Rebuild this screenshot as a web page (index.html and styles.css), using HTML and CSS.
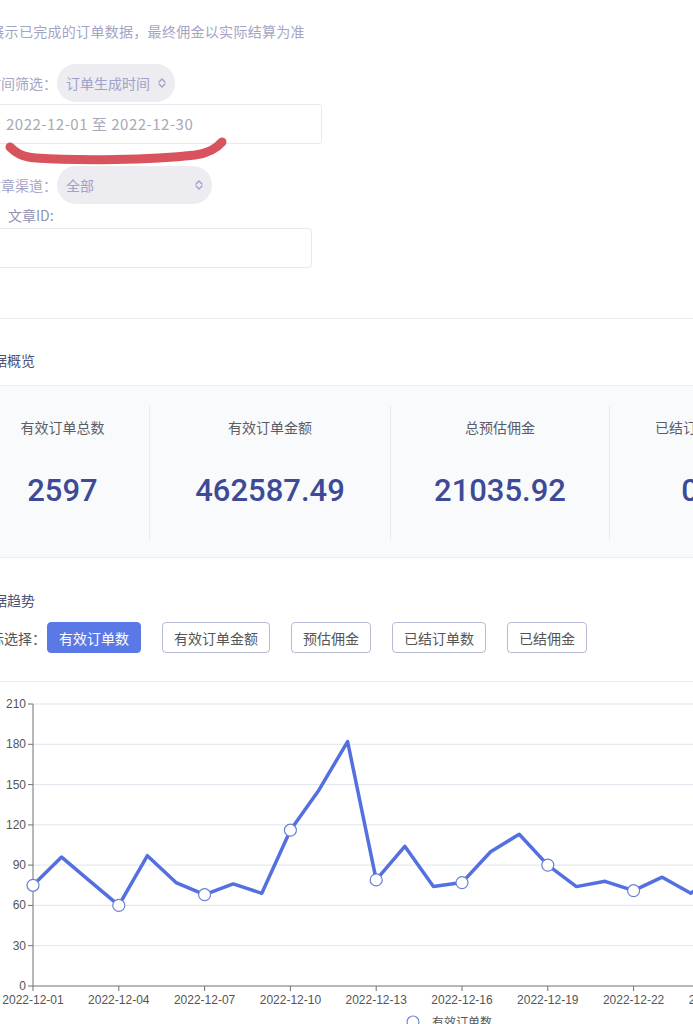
FILE: index.html
```html
<!DOCTYPE html>
<html lang="zh-CN">
<head>
    <meta charset="UTF-8">
    <meta name="viewport" content="width=device-width, initial-scale=1.0">
    <title>订单数据</title>
    <link rel="stylesheet" href="styles.css">
</head>
<body>
    <div class="page">
        <section class="filters">
            <p class="note">仅展示已完成的订单数据，最终佣金以实际结算为准</p>

            <div class="field-row">
                <label class="field-label">时间筛选：</label>
                <div class="pill-select">
                    <span>订单生成时间</span>
                    <svg class="updown" width="8" height="10" viewBox="0 0 8 10"><path d="M1 4 L4 1 L7 4 M1 6 L4 9 L7 6"/></svg>
                </div>
            </div>
            <div class="text-box date-box">2022-12-01 至 2022-12-30</div>

            <div class="field-row">
                <label class="field-label">文章渠道：</label>
                <div class="pill-select channel">
                    <span>全部</span>
                    <svg class="updown" width="8" height="10" viewBox="0 0 8 10"><path d="M1 4 L4 1 L7 4 M1 6 L4 9 L7 6"/></svg>
                </div>
            </div>
            <div class="id-label">文章ID:</div>
            <div class="text-box id-box"></div>

            <!-- hand-drawn mark over the date range -->
            <svg class="scribble" width="240" height="175" viewBox="0 0 240 175">
                <path d="M10 147 C 15 152, 21 157, 36 158 C 80 161, 150 160, 195 155 C 209 153, 216 149, 222 142"/>
            </svg>
        </section>

        <section class="overview">
            <h2 class="section-title">数据概览</h2>
            <div class="stats">
                <div class="stat">
                    <div class="stat-label">有效订单总数</div>
                    <div class="stat-value">2597</div>
                </div>
                <div class="stat">
                    <div class="stat-label">有效订单金额</div>
                    <div class="stat-value">462587.49</div>
                </div>
                <div class="stat">
                    <div class="stat-label">总预估佣金</div>
                    <div class="stat-value">21035.92</div>
                </div>
                <div class="stat">
                    <div class="stat-label">已结订单数</div>
                    <div class="stat-value">0</div>
                </div>
            </div>
        </section>

        <section class="trend">
            <h2 class="section-title trend-title">数据趋势</h2>
            <div class="metric-row">
                <span class="metric-label">指标选择：</span>
                <button class="metric-button active">有效订单数</button>
                <button class="metric-button">有效订单金额</button>
                <button class="metric-button">预估佣金</button>
                <button class="metric-button">已结订单数</button>
                <button class="metric-button">已结佣金</button>
            </div>

            <div class="chart">
                <svg width="920" height="350" viewBox="0 0 920 350">
                    <g transform="translate(0,8)">
                        <g class="grid">
                            <line x1="57" y1="14" x2="910" y2="14"/>
                            <line x1="57" y1="54.3" x2="910" y2="54.3"/>
                            <line x1="57" y1="94.6" x2="910" y2="94.6"/>
                            <line x1="57" y1="134.9" x2="910" y2="134.9"/>
                            <line x1="57" y1="175.1" x2="910" y2="175.1"/>
                            <line x1="57" y1="215.4" x2="910" y2="215.4"/>
                            <line x1="57" y1="255.7" x2="910" y2="255.7"/>
                        </g>
                        <g class="axis">
                            <line x1="57" y1="14" x2="57" y2="296"/>
                            <line x1="57" y1="296" x2="910" y2="296"/>
                            <path d="M52 14 H57 M52 54.3 H57 M52 94.6 H57 M52 134.9 H57 M52 175.1 H57 M52 215.4 H57 M52 255.7 H57 M52 296 H57"/>
                            <path d="M57 296 V301 M142.8 296 V301 M228.6 296 V301 M314.4 296 V301 M400.2 296 V301 M486 296 V301 M571.8 296 V301 M657.6 296 V301 M743.4 296 V301 M829.2 296 V301"/>
                        </g>
                        <g class="y-labels">
                            <text x="50" y="18">210</text>
                            <text x="50" y="58.3">180</text>
                            <text x="50" y="98.6">150</text>
                            <text x="50" y="138.9">120</text>
                            <text x="50" y="179.1">90</text>
                            <text x="50" y="219.4">60</text>
                            <text x="50" y="259.7">30</text>
                            <text x="50" y="300">0</text>
                        </g>
                        <g class="x-labels">
                            <text x="57" y="314">2022-12-01</text>
                            <text x="142.8" y="314">2022-12-04</text>
                            <text x="228.6" y="314">2022-12-07</text>
                            <text x="314.4" y="314">2022-12-10</text>
                            <text x="400.2" y="314">2022-12-13</text>
                            <text x="486" y="314">2022-12-16</text>
                            <text x="571.8" y="314">2022-12-19</text>
                            <text x="657.6" y="314">2022-12-22</text>
                            <text x="743.4" y="314">2022-12-25</text>
                            <text x="829.2" y="314">2022-12-28</text>
                        </g>
                        <polyline class="series" points="57,195.3 85.6,167.1 114.2,191.3 142.8,215.4 171.4,165.7 200,192.6 228.6,204.7 257.2,193.9 285.8,203.3 314.4,140.2 343,99.9 371.6,51.6 400.2,189.9 428.8,156.3 457.4,196.6 486,192.6 514.6,161.7 543.2,144.3 571.8,175.1 600.4,196.6 629,191.3 657.6,200.7 686.2,187.2 714.8,203.3 743.4,181.9 772,199.3 800.6,207.4 829.2,175.1 857.8,191.3 886.4,202"/>
                        <g class="markers">
                            <circle cx="57" cy="195.3" r="6"/>
                            <circle cx="142.8" cy="215.4" r="6"/>
                            <circle cx="228.6" cy="204.7" r="6"/>
                            <circle cx="314.4" cy="140.2" r="6"/>
                            <circle cx="400.2" cy="189.9" r="6"/>
                            <circle cx="486" cy="192.6" r="6"/>
                            <circle cx="571.8" cy="175.1" r="6"/>
                            <circle cx="657.6" cy="200.7" r="6"/>
                            <circle cx="743.4" cy="181.9" r="6"/>
                            <circle cx="829.2" cy="175.1" r="6"/>
                        </g>
                        <g class="legend">
                            <circle cx="437" cy="332" r="6"/>
                            <text x="456" y="337">有效订单数</text>
                        </g>
                    </g>
                </svg>
            </div>
        </section>
    </div>
</body>
</html>
```

FILE: styles.css
```css
html, body {
    margin: 0;
    padding: 0;
    background-color: white;
    overflow-x: hidden;
}
body {
    font-family: "Noto Sans CJK SC", "Noto Sans", sans-serif;
    font-size: 14px;
    color: #555;
}
.page {
    position: relative;
    width: 940px;
    margin-left: -24px;
}
.filters {
    padding: 21px 0 50px;
    border-bottom: 1px solid #eceef3;
}
.note {
    margin: 0 0 23px;
    line-height: 20px;
    letter-spacing: 0.3px;
    color: #a3a5c6;
}
.field-row {
    display: flex;
    align-items: center;
    height: 38px;
}
.field-label {
    width: 81px;
    text-align: right;
    color: #a3a5c6;
}
.pill-select {
    display: flex;
    align-items: center;
    justify-content: space-between;
    box-sizing: border-box;
    width: 118px;
    height: 38px;
    padding: 0 9px;
    border-radius: 19px;
    background-color: #ececf1;
    color: #9ea1c9;
}
.pill-select.channel {
    width: 155px;
}
.updown {
    fill: none;
    stroke: #9ea1c9;
    stroke-width: 1.4;
    stroke-linecap: round;
    stroke-linejoin: round;
}
.text-box {
    box-sizing: border-box;
    height: 40px;
    border: 1px solid #e8e9ef;
    border-radius: 4px;
    line-height: 38px;
    color: #a8a9b8;
}
.date-box {
    width: 346px;
    margin: 2px 0 22px;
    padding-left: 29px;
    font-size: 15px;
    letter-spacing: 0.5px;
}
.id-box {
    width: 336px;
    margin-top: 2px;
}
.id-label {
    padding-left: 32px;
    line-height: 22px;
    color: #8f92b4;
}
.scribble {
    position: absolute;
    top: 0;
    left: 24px;
    fill: none;
    stroke: #d9535e;
    stroke-width: 9;
    stroke-linecap: round;
    stroke-linejoin: round;
}
.section-title {
    margin: 0;
    padding: 31px 0 15px 3px;
    font-size: 14px;
    font-weight: normal;
    line-height: 20px;
    color: #4d5175;
    border-bottom: 1px solid #eceef3;
}
.stats {
    display: grid;
    grid-template-columns: 174px 241px 219px 160px;
    padding: 20px 0 17px;
    background-color: #f9fafc;
    border-bottom: 1px solid #eceef3;
}
.stat {
    height: 134px;
    padding-top: 11px;
    box-sizing: border-box;
    text-align: center;
    border-right: 1px solid #e8eaf0;
}
.stat:last-child {
    border-right: none;
}
.stat-label {
    line-height: 20px;
    color: #5a5c68;
}
.stat-value {
    margin-top: 34px;
    font-family: Roboto, "Liberation Sans", sans-serif;
    font-size: 31px;
    font-weight: 500;
    line-height: 40px;
    color: #3f4a96;
}
.trend-title {
    padding: 32px 0 0 3px;
    border-bottom: none;
}
.metric-row {
    display: flex;
    align-items: center;
    gap: 21px;
    height: 31px;
    margin-top: 12px;
    padding-bottom: 28px;
    border-bottom: 1px solid #eceef3;
}
.metric-label {
    width: 50px;
    white-space: nowrap;
    color: #555;
}
.metric-button {
    box-sizing: border-box;
    height: 31px;
    padding: 0 11px;
    border: 1px solid #b7bad5;
    border-radius: 4px;
    background-color: white;
    font-family: inherit;
    font-size: 14px;
    color: #555;
    cursor: pointer;
}
.metric-button.active {
    background-color: #5a79e6;
    border-color: #5a79e6;
    color: white;
}
.chart svg {
    display: block;
}
.grid line {
    stroke: #e0e4ec;
    stroke-width: 1;
}
.axis line, .axis path {
    stroke: #6e7079;
    stroke-width: 1;
    fill: none;
}
.y-labels text, .x-labels text {
    font-family: "Liberation Sans", Arial, sans-serif;
    font-size: 12px;
    fill: #555;
}
.y-labels text {
    text-anchor: end;
}
.x-labels text {
    text-anchor: middle;
}
.series {
    fill: none;
    stroke: #5470e0;
    stroke-width: 3.5;
    stroke-linejoin: round;
}
.markers circle, .legend circle {
    fill: white;
    stroke: #6a80d6;
    stroke-width: 1.2;
}
.legend text {
    font-size: 12px;
    fill: #555;
}
```
